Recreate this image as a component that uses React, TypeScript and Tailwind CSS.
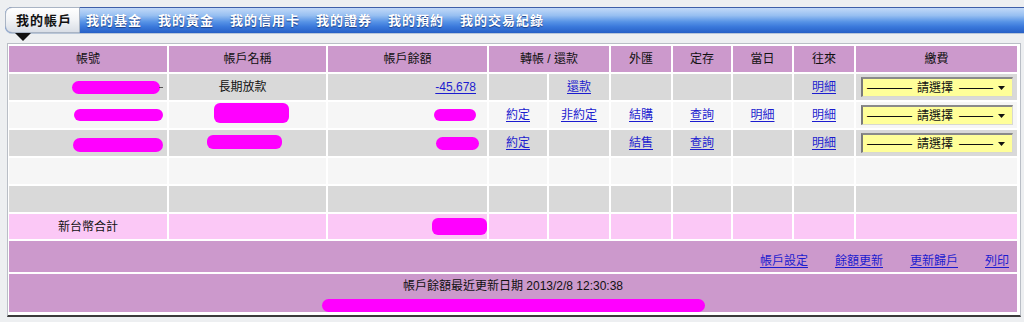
import React from 'react';

const COLS = 'grid grid-cols-[158px_157px_159px_58px_60px_60px_58px_59px_60px_161px] gap-[2px]';

const TABS = ['我的基金', '我的黃金', '我的信用卡', '我的證券', '我的預約', '我的交易紀錄'];

// magenta redaction scribble
function Blob({ w, h, className = '' }: { w: number; h: number; className?: string }) {
  return (
    <span
      className={`inline-block bg-[#ff00ff] rounded-[6px] ${className}`}
      style={{ width: w, height: h }}
    />
  );
}

function Link({ children }: { children: React.ReactNode }) {
  return <span className="text-[#1c1ccf] underline underline-offset-2 cursor-pointer">{children}</span>;
}

function PaySelect() {
  return (
    <div className="w-[152px] h-[20px] ml-[5px] flex items-center bg-[#ffff99] border-t-2 border-l-2 border-t-[#8a8a8a] border-l-[#7a7a7a] border-b border-r border-b-[#d8d8d0] border-r-[#d8d8d0] text-[#111] pl-[4px]">
      <span className="tracking-[-1px]">————</span>
      <span className="mx-[6px]">請選擇</span>
      <span className="tracking-[-1px]">———</span>
      <svg className="ml-auto mr-[7px]" width="7" height="4" viewBox="0 0 7 4">
        <polygon points="0,0 7,0 3.5,4" fill="#111" />
      </svg>
    </div>
  );
}

type Cell = { c?: React.ReactNode; align?: 'l' | 'c' | 'r' | 'rr' };

function DataRow({ bg, cells, h = 'h-[26px]' }: { bg: string; cells: Cell[]; h?: string }) {
  return (
    <>
      {cells.map((cell, i) => (
        <div
          key={i}
          className={`${bg} ${h} flex items-center ${
            cell.align === 'r'
              ? 'justify-end pr-[11px]'
              : cell.align === 'rr'
                ? 'justify-end pr-[4px]'
                : cell.align === 'l'
                  ? 'justify-start'
                  : 'justify-center'
          }`}
        >
          {cell.c}
        </div>
      ))}
    </>
  );
}

export default function App() {
  const gray = 'bg-[#d9d9d9]';
  const light = 'bg-[#f6f6f6]';
  const pink = 'bg-[#fbc8f6]';
  const empty: Cell[] = Array.from({ length: 10 }, () => ({}));

  return (
    <div className="w-[1024px] h-[322px] overflow-hidden bg-[#edeff1] font-['Liberation_Sans','Noto_Sans_CJK_TC',sans-serif] text-[12px] leading-none text-[#111]">
      {/* tab bar */}
      <div className="pt-[7px] pl-[5px]">
        <div className="h-[26px] flex items-stretch rounded-l-[7px] border-t border-[#3f5fa8] bg-[linear-gradient(to_bottom,#c2d9f8_0%,#97bff1_30%,#5793e6_55%,#3a78db_75%,#2760c6_100%)] shadow-[0_1px_0_#b9c6d8]">
          <div className="flex items-center pl-[10px] pr-[7px] rounded-l-[7px] bg-[linear-gradient(to_bottom,#ffffff_0%,#f1f3f6_50%,#d9dee6_100%)] border border-[#a9b4c4] -mt-px text-[13px] font-bold tracking-[1px] text-[#111]">
            我的帳戶
          </div>
          <div className="flex items-center gap-[16px] ml-[6px] text-[13px] font-bold tracking-[1px] text-white [text-shadow:0_1px_1px_#1b3c86]">
            {TABS.map((t) => (
              <span key={t}>{t}</span>
            ))}
          </div>
        </div>
        <svg className="block ml-[10px]" width="16" height="8" viewBox="0 0 16 8">
          <polygon points="0,0 16,0 8,8" fill="#111" />
        </svg>
      </div>

      {/* account panel */}
      <div className="mt-[2px] ml-[7px] w-[1014px] bg-white border-l border-r border-t border-[#b9bec6] border-b-2 border-b-[#3a3a3a] pl-[1px] pr-[3px] pt-[2px] pb-[3px]">
        <div className={COLS}>
          {/* header */}
          {['帳號', '帳戶名稱', '帳戶餘額'].map((t) => (
            <div key={t} className="bg-[#cc99cc] h-[26px] flex items-center justify-center">{t}</div>
          ))}
          <div className="col-span-2 bg-[#cc99cc] h-[26px] flex items-center justify-center">轉帳 / 還款</div>
          {['外匯', '定存', '當日', '往來', '繳費'].map((t) => (
            <div key={t} className="bg-[#cc99cc] h-[26px] flex items-center justify-center">{t}</div>
          ))}

          <DataRow
            bg={gray}
            cells={[
              { c: <span className="flex items-center"><Blob w={88} h={13} className="rounded-[7px]" /><span className="w-[4px] h-[1px] bg-[#555] -ml-[1px]" /></span>, align: 'rr' },
              { c: <span className="-ml-[10px]">長期放款</span> },
              { c: <Link>-45,678</Link>, align: 'r' },
              {},
              { c: <Link>還款</Link> },
              {},
              {},
              {},
              { c: <Link>明細</Link> },
              { c: <PaySelect />, align: 'l' },
            ]}
          />
          <DataRow
            bg={light}
            cells={[
              { c: <Blob w={89} h={12} />, align: 'rr' },
              { c: <Blob w={75} h={20} className="ml-[7px] -mt-[4px] rounded-[4px]" /> },
              { c: <Blob w={42} h={12} />, align: 'r' },
              { c: <Link>約定</Link> },
              { c: <Link>非約定</Link> },
              { c: <Link>結購</Link> },
              { c: <Link>查詢</Link> },
              { c: <Link>明細</Link> },
              { c: <Link>明細</Link> },
              { c: <PaySelect />, align: 'l' },
            ]}
          />
          <DataRow
            bg={gray}
            cells={[
              { c: <Blob w={90} h={14} className="rounded-[7px] mt-[3px]" />, align: 'rr' },
              { c: <Blob w={75} h={14} className="-ml-[7px] -mt-[2px]" /> },
              { c: <Blob w={43} h={13} className="rounded-[7px] -mr-[3px]" />, align: 'r' },
              { c: <Link>約定</Link> },
              {},
              { c: <Link>結售</Link> },
              { c: <Link>查詢</Link> },
              {},
              { c: <Link>明細</Link> },
              { c: <PaySelect />, align: 'l' },
            ]}
          />
          <DataRow bg={light} cells={empty} />
          <DataRow bg={gray} cells={empty} />
          <DataRow
            bg={pink}
            h="h-[25px]"
            cells={[
              { c: '新台幣合計' },
              {},
              { c: <Blob w={55} h={17} className="-mr-[11px] rounded-[5px]" />, align: 'r' },
              {},
              {},
              {},
              {},
              {},
              {},
              {},
            ]}
          />

          {/* footer */}
          <div className="col-span-10 h-[31px] bg-[#cc99cc] flex items-end justify-end gap-[27px] pr-[8px] pb-[5px]">
            <Link>帳戶設定</Link>
            <Link>餘額更新</Link>
            <Link>更新歸戶</Link>
            <Link>列印</Link>
          </div>
          <div className="col-span-10 h-[38px] bg-[#cc99cc] flex flex-col items-center pt-[6px]">
            <span>帳戶餘額最近更新日期 2013/2/8 12:30:38</span>
            <Blob w={383} h={17} className="mt-[7px] rounded-[8px]" />
          </div>
        </div>
      </div>
    </div>
  );
}
